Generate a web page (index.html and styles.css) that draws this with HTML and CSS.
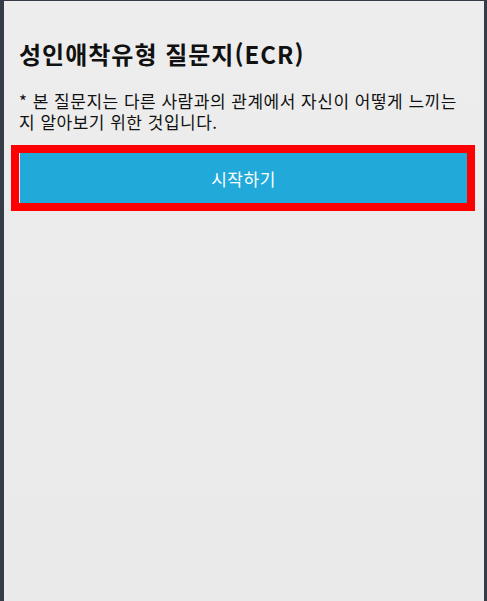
FILE: index.html
```html
<!DOCTYPE html>
<html lang="ko">
<head>
  <meta charset="UTF-8">
  <meta name="viewport" content="width=device-width, initial-scale=1">
  <title>성인애착유형 질문지(ECR)</title>
  <link rel="stylesheet" href="styles.css">
</head>
<body>
  <div class="panel">
    <h1>성인애착유형 질문지(ECR)</h1>
    <p class="intro">* 본 질문지는 다른 사람과의 관계에서 자신이 어떻게 느끼는지 알아보기 위한 것입니다.</p>
    <button class="start" type="button">시작하기</button>
  </div>
</body>
</html>
```

FILE: styles.css
```css
body {
  margin: 0;
  padding: 1px 3px 0 4px;
  background-color: #363b48;
  font-family: "Noto Sans CJK KR", "Noto Sans", sans-serif;
  color: #111;
}
.panel {
  box-sizing: border-box;
  min-height: 600px;
  padding: 37px 17px 0 15px;
  background: linear-gradient(#ededed, #eaeaea);
}
h1 {
  margin: 0;
  font-size: 24px;
  line-height: 32px;
  font-weight: 700;
  letter-spacing: 1px;
}
.intro {
  margin: 20px 0 21px;
  font-size: 17px;
  line-height: 21px;
  letter-spacing: 0.5px;
}
/* 시작 버튼 (포커스 테두리 포함) */
.start {
  display: block;
  width: 100%;
  height: 50px;
  border: 0;
  border-left: 1px solid #d8eef6;
  outline: 8px solid #ff0000;
  background-color: #21a9d9;
  color: #fff;
  font-family: inherit;
  font-size: 17px;
  letter-spacing: 0.5px;
}
```
